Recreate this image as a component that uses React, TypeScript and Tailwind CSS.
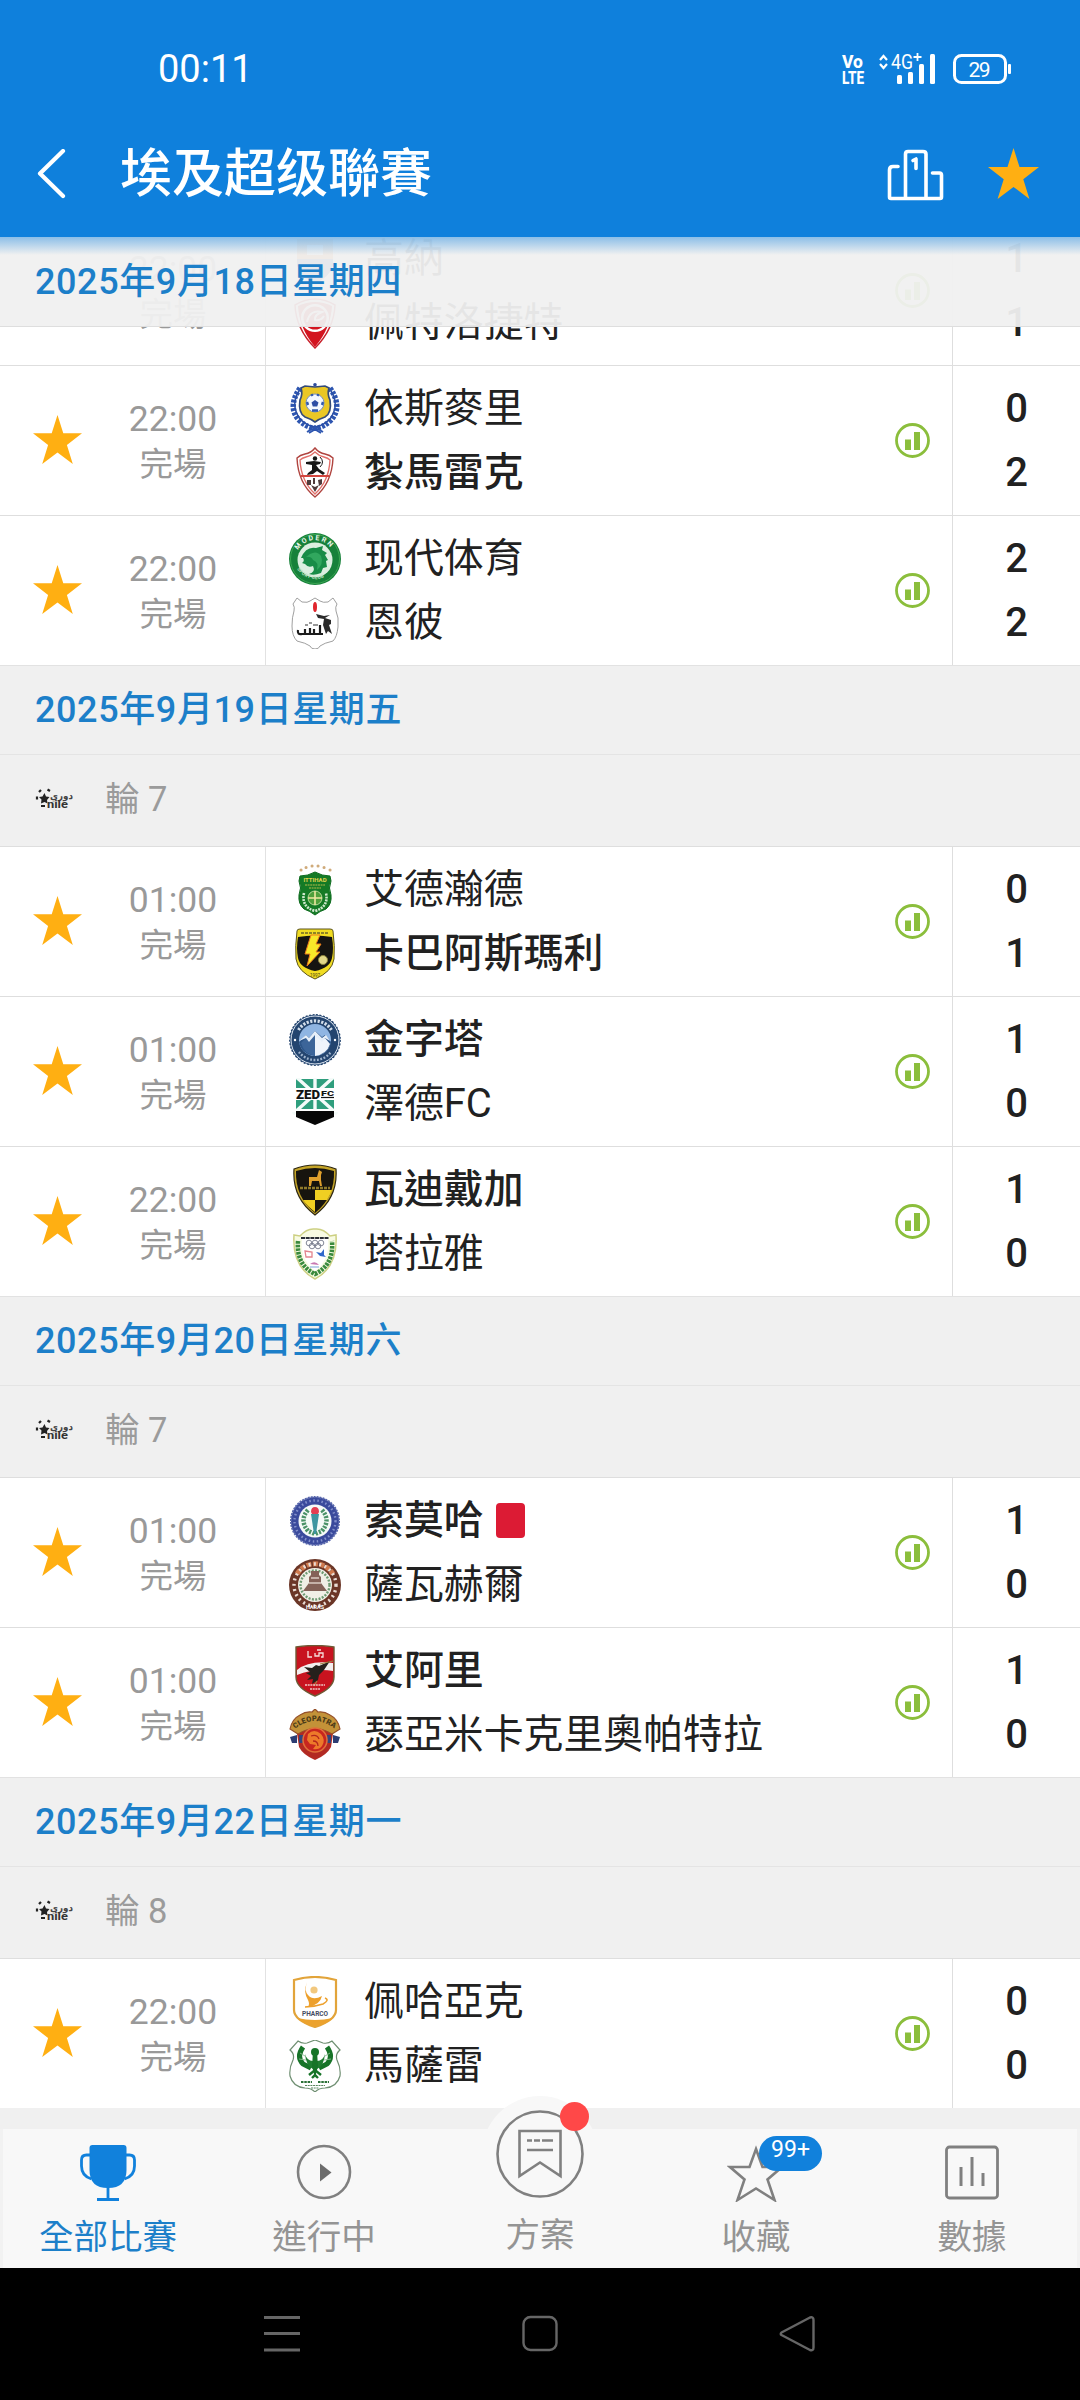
import type { ReactNode } from 'react'

type Team = { name: string; crest: string; score: number; win?: boolean; red?: boolean }
type Match = { time: string; home: Team; away: Team; starred?: boolean }
type Day = { date: string; round?: number; matches: Match[] }

const hidden: Match = {
  time: '22:00',
  starred: false,
  home: { name: '高納', crest: 'gouna', score: 1 },
  away: { name: '佩特洛捷特', crest: 'petrojet', score: 1 },
}

const firstDay: Match[] = [
  {
    time: '22:00',
    home: { name: '依斯麥里', crest: 'ismaily', score: 0 },
    away: { name: '紮馬雷克', crest: 'zamalek', score: 2, win: true },
  },
  {
    time: '22:00',
    home: { name: '现代体育', crest: 'modern', score: 2 },
    away: { name: '恩彼', crest: 'enppi', score: 2 },
  },
]

const days: Day[] = [
  {
    date: '2025年9月19日星期五',
    round: 7,
    matches: [
      {
        time: '01:00',
        home: { name: '艾德瀚德', crest: 'ittihad', score: 0 },
        away: { name: '卡巴阿斯瑪利', crest: 'kahraba', score: 1, win: true },
      },
      {
        time: '01:00',
        home: { name: '金字塔', crest: 'pyramids', score: 1, win: true },
        away: { name: '澤德FC', crest: 'zed', score: 0 },
      },
      {
        time: '22:00',
        home: { name: '瓦迪戴加', crest: 'degla', score: 1, win: true },
        away: { name: '塔拉雅', crest: 'talaea', score: 0 },
      },
    ],
  },
  {
    date: '2025年9月20日星期六',
    round: 7,
    matches: [
      {
        time: '01:00',
        home: { name: '索莫哈', crest: 'smouha', score: 1, win: true, red: true },
        away: { name: '薩瓦赫爾', crest: 'haras', score: 0 },
      },
      {
        time: '01:00',
        home: { name: '艾阿里', crest: 'ahly', score: 1, win: true },
        away: { name: '瑟亞米卡克里奧帕特拉', crest: 'cleopatra', score: 0 },
      },
    ],
  },
  {
    date: '2025年9月22日星期一',
    round: 8,
    matches: [
      {
        time: '22:00',
        home: { name: '佩哈亞克', crest: 'pharco', score: 0 },
        away: { name: '馬薩雷', crest: 'masry', score: 0 },
      },
    ],
  },
]

const crests: Record<string, ReactNode> = {
  gouna: (
    <>
      <path d="M8 6h36v26q-3 12-18 18Q11 44 8 32z" fill="#e8843c" />
      <path d="M8 26h36v6q-3 12-18 18Q11 44 8 32z" fill="#2b4d9c" />
      <path d="M18 12h16v10H18z" fill="#fff" />
    </>
  ),
  petrojet: (
    <>
      <path d="M6 8Q26-4 46 8q-1 24-20 43Q7 32 6 8z" fill="#fff" stroke="#c8202a" strokeWidth="1.5" />
      <path d="M9 9Q26 1 43 9q-1 22-17 41Q10 31 9 9z" fill="#d3141f" />
      <circle cx="26" cy="21" r="14" fill="#fff" />
      <circle cx="26" cy="21" r="11.5" fill="#d3141f" />
      <path d="M18 25q3-13 15-10-8 3-7 8 6 1 9-4" fill="none" stroke="#fff" strokeWidth="2" />
    </>
  ),
  ismaily: (
    <>
      <path d="M11 5Q-2 24 10 37q8 8 16 8 8 0 16-8Q54 24 41 5" fill="none" stroke="#2d55b0" strokeWidth="5.5" strokeDasharray="3 1.3" />
      <path d="M10 8Q1 22 11 36q7 7 15 8 8-1 15-8Q51 22 42 8" fill="none" stroke="#2a4fa6" strokeWidth="1.5" />
      <path d="M18 49l8-5 8 5M22 44l10 6M30 44l-10 6" fill="none" stroke="#2d55b0" strokeWidth="1.8" />
      <circle cx="26" cy="1.8" r="1.8" fill="#2d4b9c" />
      <path d="M12 5l4-2 10 1 10-1 4 2q-2 6 1 12 2 13-5 17-6 2-10 5-4-3-10-5-7-4-5-17 3-6 1-12z" fill="#eac725" stroke="#334a7a" strokeWidth="1.7" />
      <circle cx="26" cy="20" r="9" fill="#f4f8ff" stroke="#7891c8" strokeWidth="1" />
      <path d="M26 17l3.500 2.500-1.300 4h-4.400l-1.300-4z" fill="#2d4ea5" />
      <path d="M22 12.500l2-1M30 12.500l-2-1M18 19l1 3M34 19l-1 3M23 27.500h6" stroke="#3159ac" strokeWidth="2.400" fill="none" />
    </>
  ),
  zamalek: (
    <>
      <path d="M26 1q4 5 10 6 5 1 8 4-1 25-18 39Q9 36 8 11q3-3 8-4 6-1 10-6z" fill="#fff" stroke="#b0443f" strokeWidth="1.4" />
      <path d="M26 5q4 4 9 5 4 1 6 3-1 21-15 34Q12 34 11 13q2-2 6-3 5-1 9-5z" fill="#fff" stroke="#e2706b" strokeWidth="1.4" />
      <path d="M12 29h28" stroke="#d4453e" strokeWidth="2" />
      <circle cx="26" cy="11.500" r="2.200" fill="#171717" />
      <path d="M17 15l8-1 7 1-1 2-4 1 3 4 6 4-2 2-6-4-4 3-6 1 1-2 4-3v-5l-6-1z" fill="#171717" />
      <path d="M31 10q5 5 0 10" fill="none" stroke="#171717" strokeWidth="1" />
      <path d="M18 33h4v5h-4zM24 31h2v6h-2zM29 33l4-1v5l-3 2zM22 38l4 2 4-2-4 7z" fill="#4f3b3b" />
    </>
  ),
  modern: (
    <>
      <circle cx="26" cy="26" r="26" fill="#17813a" />
      <circle cx="26" cy="26" r="24.5" fill="none" stroke="#3ba653" strokeWidth="1" />
      <circle cx="26" cy="27" r="17.500" fill="#dcefe0" />
      <path d="M12 25q5-12 15-10l7-2-1 4 5 3-2 2 3 5-2 1 1 6-4 1-2 5q-7 3-12 1 7-2 4-8-5 2-8-2l-3-1q3-2 1-5z" fill="#188c47" />
      <path d="M21 21q7-4 11 2 3 8-4 14 2-8-4-10-2-4-7-3z" fill="#31a75e" />
      <path id="mod" d="M9 17A19.500 19.500 0 0 1 43 17" fill="none" />
      <path id="mod2" d="M8 36A22 22 0 0 0 45 36" fill="none" />
      <text fontSize="7" fontWeight="700" fill="#e9f6e9"><textPath href="#mod" textLength="38">MODERN</textPath></text>
      <text fontSize="4.6" fontWeight="700" fill="#bfe2c4" letterSpacing="0.4"><textPath href="#mod2">SPORT CLUB</textPath></text>
    </>
  ),
  enppi: (
    <>
      <path d="M8 1l5 4q6 1 8-1l5-3 5 3q3 2 8 1l5-4 4 6q-2 3-1 7 3 6 2 16-1 10-5 14-9 2-13 5-1 3-5 3t-5-3q-4-3-13-5-5-5-5-15 0-9 2-15 1-4-1-7z" fill="#fff" stroke="#a0a0a0" strokeWidth="1" />
      <ellipse cx="26" cy="10" rx="2" ry="5" fill="#e0252c" />
      <path d="M27 17l8 2 6-1-5 3 6 2v4l-2 1 3 9-4-3-2 3-3-9 1-6-6-1z" fill="#2b2b2b" />
      <path d="M9 33q-1 5 4 4h21M16 32v4M21 31v5M25 32v4M31 28v8" fill="none" stroke="#1b1b1b" strokeWidth="2.200" />
      <path d="M16 28h3m1-2h3m1 2h5" fill="none" stroke="#777" strokeWidth="1.400" />
    </>
  ),
  ittihad: (
    <>
      <path d="M12 6h.1M17 3.500h.1M23 2h.1M29 2h.1M35 3.500h.1M41 6h.1" stroke="#d0ab7b" strokeWidth="3" strokeLinecap="round" />
      <path d="M11 12q8 0 15-4 7 4 15 4l1 5q-3 7 0 14 1 9-5 14-6 2-11 6-5-4-11-6-6-5-5-14 3-7 0-14z" fill="#147a25" stroke="#0b6a1c" strokeWidth="1" />
      <text x="26" y="18" fontSize="6" fontWeight="700" fill="#e3d64f" textAnchor="middle">ITTIHAD</text>
      <path d="M16 21h20M20 24h12" stroke="#b5b94a" strokeWidth="1.2" strokeDasharray="2 .6" />
      <path d="M15 29q-3 14 11 18 14-4 11-18" fill="none" stroke="#cfe8cd" strokeWidth="2.6" strokeDasharray="2 1" />
      <circle cx="26" cy="34" r="7" fill="#4fa03c" stroke="#b6d89a" />
      <path d="M26 27v14M19 34h14" stroke="#eee6a0" strokeWidth="1.6" />
    </>
  ),
  kahraba: (
    <>
      <path d="M8 3q0-2 3-2h30q3 0 3 2 2 15 1 28-2 13-19 20Q9 44 7 31 6 18 8 3z" fill="#f1dc22" stroke="#5c5520" strokeWidth="1" />
      <path d="M9 9q17-3 34 0 2 12 0 21-2 10-17 13Q11 40 9 30q-2-10 0-21z" fill="#151411" />
      <path d="M12 5h28" stroke="#6d6628" strokeWidth="1.6" strokeDasharray="3 1" />
      <path d="M22 7h9l-4 9h5l-5 8h4L18 38l3-12h-5z" fill="#f8e829" stroke="#ec7a1c" strokeWidth="1" />
      <circle cx="34" cy="32" r="4.500" fill="#e2d889" stroke="#8b833c" />
      <text x="26" y="49" fontSize="4.500" fill="#4b4518" textAnchor="middle">1997</text>
    </>
  ),
  pyramids: (
    <>
      <circle cx="26" cy="26" r="25.200" fill="#24456f" stroke="#23446e" strokeWidth="1.4" strokeDasharray="2 1.500" />
      <circle cx="26" cy="26" r="24" fill="none" stroke="#dfe8f3" strokeWidth="1" />
      <circle cx="26" cy="26" r="16" fill="#8fb5e2" />
      <path d="M10 28l7-7 3 3 6-7 7 6 3-2 6 7q-2 12-16 14-14-2-16-14z" fill="#2c5588" />
      <path d="M12 29l6-6 3 4 5-7v22Q15 40 12 29z" fill="#3c6599" />
      <path d="M26 20l7 6 3-2 5 6q-3 10-15 12z" fill="#eef4fb" />
      <path d="M10 27l7-6 3 3 6-7 7 7 4-3 4 6-5-3-3 4-7-7-6 7-3-4z" fill="#e6eff9" />
      <path d="M9.500 16A19.500 19.500 0 0 1 42.500 16" fill="none" stroke="#d3deea" strokeWidth="3.200" strokeDasharray="2.200 1.500" />
      <path d="M10 38A20 20 0 0 0 42 38" fill="none" stroke="#9fb4cd" strokeWidth="2.400" strokeDasharray="1.800 1.600" />
      <circle cx="6" cy="26" r="1.200" fill="#fff" />
      <circle cx="46" cy="26" r="1.200" fill="#fff" />
    </>
  ),
  zed: (
    <>
      <path d="M7 1h38v30H7z" fill="#2f9e7d" />
      <path d="M26 16L5 -3M26 16L47 -3M26 16V0M26 16L4 36M26 16L48 36M26 16v16" stroke="#f4fbf9" strokeWidth="3.400" />
      <path d="M0 10h52v12H0zM0 0h7v34H0zM45 0h7v34h-7z" fill="#fff" />
      <path d="M7 33h38v6L26 47 7 39z" fill="#070707" />
      <text x="7" y="20.500" fontSize="12" fontWeight="900" fill="#131313" textLength="24" lengthAdjust="spacingAndGlyphs">ZED</text>
      <text x="32" y="17.500" fontSize="8" fontWeight="900" fill="#131313" textLength="13" lengthAdjust="spacingAndGlyphs">FC</text>
      <path d="M32 19.500h13" stroke="#131313" strokeWidth="1.200" />
    </>
  ),
  degla: (
    <>
      <path d="M5 5q21-8 42 0 2 29-21 46Q3 34 5 5z" fill="#c5a528" stroke="#2e2813" strokeWidth="1.200" />
      <path d="M7 7q19-6 38 0 1 26-19 42Q6 33 7 7z" fill="#17140e" />
      <path d="M26 26h17q-2 5-5 10H26zM26 36v12Q18 42 14 36z" fill="#f0cf22" />
      <path d="M20 13h8l2-7 3 2-1 3v5l1 6h-2l-1-5h-7l-1 5h-2v-5z" fill="#e0a02c" />
      <path d="M11 24h30" stroke="#8f7a2a" strokeWidth="2.600" strokeDasharray="3 1" />
    </>
  ),
  talaea: (
    <>
      <path d="M5 7l6 1Q18 0 26 1q8-1 15 7l6-1q2 32-21 44Q3 39 5 7z" fill="#f8fbe3" stroke="#cdd083" strokeWidth="1.500" />
      <path d="M9 13q-2 24 17 33 19-9 17-33" fill="none" stroke="#3a8a3d" strokeWidth="4.500" strokeDasharray="2.600 1" />
      <path d="M13 11q13-3 26 0 2 21-13 32Q11 32 13 11z" fill="#fff" />
      <path d="M12 10h28" stroke="#2b2f35" strokeWidth="2.200" strokeDasharray="4 .7" />
      <g fill="none" stroke="#777c8c" strokeWidth=".9">
        <circle cx="20" cy="15" r="2.800" /><circle cx="26" cy="15" r="2.800" /><circle cx="32" cy="15" r="2.800" /><circle cx="23" cy="18" r="2.800" /><circle cx="29" cy="18" r="2.800" />
      </g>
      <path d="M16 23l7 1v5h-6z" fill="none" stroke="#e4848d" strokeWidth="1.300" />
      <path d="M27 24l5 1 3-4v6l2 2-6-1z" fill="#2f68cb" />
      <path d="M21 36q5-4 9 1z" fill="#c878b2" />
      <path d="M21 39h9" stroke="#7aa2d8" />
    </>
  ),
  smouha: (
    <>
      <circle cx="26" cy="26" r="24" fill="#3a4a9c" stroke="#5867ac" strokeWidth="2" strokeDasharray="2 1" />
      <circle cx="26" cy="26" r="20.500" fill="none" stroke="#8491cc" strokeWidth="2.400" strokeDasharray="1.500 2.600" />
      <circle cx="26" cy="26" r="16.500" fill="#f5faf8" />
      <path d="M19 15q-9 10 0 21l7 3 7-3q9-11 0-21" fill="none" stroke="#4a9268" strokeWidth="4.500" strokeDasharray="2.200 1.300" />
      <path d="M22 19h8l-3 20h-2z" fill="#3e95a0" />
      <path d="M22 17q0-5 4-5t4 5l-1 2h-6z" fill="#e43e52" />
    </>
  ),
  haras: (
    <>
      <circle cx="26" cy="26" r="26" fill="#6b3627" />
      <path d="M8 15A21 21 0 0 1 44 15" fill="none" stroke="#cf7a4e" strokeWidth="5" strokeDasharray="5 1.500" />
      <circle cx="26" cy="26" r="21" fill="none" stroke="#e9dcd4" strokeWidth="3.400" strokeDasharray="2 3.400" />
      <circle cx="26" cy="26" r="17" fill="#f0efe6" />
      <circle cx="26" cy="26" r="14.500" fill="none" stroke="#6d9a72" strokeWidth="2.400" strokeDasharray="2 1.400" />
      <path d="M22 12h8v4l2 2v6l6 8H14l6-8v-6l2-2z" fill="#846258" />
      <path d="M22 19h8M20 24h12" stroke="#d9cbc2" strokeWidth="1.500" />
      <text x="26" y="49.500" fontSize="5.500" fontWeight="700" fill="#fff" textAnchor="middle">HARAS</text>
    </>
  ),
  ahly: (
    <>
      <path d="M7 2q19-3 38 0v30q0 11-19 19Q7 43 7 32z" fill="#c8131f" stroke="#6e5a35" strokeWidth="1.400" />
      <path d="M8 25q12-10 36-7v8q-18-3-36 4z" fill="#f3eeee" />
      <path d="M15 22l8 1 4-3 3 1 11-5-6 9-5 5-1 5-6 4 1-5-6 1 4-4-5-3 4-1z" fill="#26201c" />
      <path d="M31 19l13-3M28 36l-3 5" stroke="#9d8141" strokeWidth="1.200" />
      <path d="M19 6v6h4M26 8v3h4V8h4v4h-2M28 5h4" fill="none" stroke="#f6e1de" strokeWidth="1.300" />
      <path d="M16 40h20M21 44h10" stroke="#eec5c3" strokeWidth="1.500" strokeDasharray="2 .7" />
    </>
  ),
  cleopatra: (
    <>
      <path d="M7 18h38l-3 20q-4 8-16 13Q14 46 10 38z" fill="#b22a23" />
      <path d="M1 28l7-2v8H3zM51 28l-7-2v8h5z" fill="#2c3d73" />
      <path d="M10 26h32v8H10z" fill="#34457c" />
      <path d="M11 6q6-4 12-3l3-3 3 3q6-1 12 3 8 4 10 14l-8 5q-17-11-34 0l-8-5Q3 10 11 6z" fill="#c39238" stroke="#96512a" strokeWidth="1.200" />
      <path id="cleo" d="M6 20Q26 4 46 20" fill="none" />
      <text fontSize="7.500" fontWeight="900" fill="#4b3a16"><textPath href="#cleo" textLength="43">CLEOPATRA</textPath></text>
      <circle cx="26" cy="31" r="12" fill="#c7261f" stroke="#e0703a" strokeWidth="1.500" />
      <path d="M19 25q6-6 13 0 5 6 1 12-3 4-9 3l3-4-6-1-3-4z" fill="#ed7a2a" />
      <path d="M22 27q6-2 8 3M24 32q5 0 5 5" fill="none" stroke="#b3251c" strokeWidth="1.300" />
    </>
  ),
  pharco: (
    <>
      <path d="M5 4q21-6 42 0v30q0 10-21 17Q5 44 5 34z" fill="#fff" stroke="#e2a43a" strokeWidth="2.200" />
      <path d="M8 42q18 4 36 0-4 5-18 9Q12 47 8 42z" fill="#eba22e" />
      <path d="M18 6q-3 9 1 13 5 6 14 1-2 9-14 11 2-3 0-7-5-8-1-18z" fill="#eda02c" />
      <circle cx="25" cy="14" r="3.600" fill="#f2c87e" />
      <path d="M36 22q5 2-2 6-9 3-18 3" fill="none" stroke="#eda02c" strokeWidth="1.500" />
      <text x="26" y="39.500" fontSize="6.500" fontWeight="700" fill="#444b62" textAnchor="middle">PHARCO</text>
    </>
  ),
  masry: (
    <>
      <path d="M9 1q4 3 9 2l8-3 8 3q5 1 9-2l8 9q-5 4-3 10 4 8 3 16-3 11-15 12-6 0-10 4-4-4-10-4Q4 47 1 36q-1-8 3-16 2-6-3-10z" fill="#fff" stroke="#6f8f72" strokeWidth="1.200" />
      <path d="M14 7Q7 17 14 24l8 4M38 7q7 10 0 17l-8 4" fill="none" stroke="#177428" strokeWidth="5" />
      <path d="M16 14q2 7 8 7h4q6 0 8-7-1 12-8 15l-2 1-2-1q-7-3-8-15z" fill="#1f7d31" />
      <circle cx="26" cy="12" r="4" fill="#177428" />
      <path d="M24 12h4l1 14-3 12-3-12z" fill="#177428" />
      <path d="M20 35l6-5 6 5M23 38l3-3 3 3" fill="none" stroke="#177428" strokeWidth="2.400" />
      <path d="M11 13l5 3M10 19l7 1M41 13l-5 3M42 19l-7 1" stroke="#8dbb93" strokeWidth=".9" />
      <path d="M12 42h11M29 42h11" stroke="#2a7036" strokeWidth="2" strokeDasharray="2.500 .8" />
      <path d="M16 45.500h20M22 48h8" stroke="#58865e" strokeWidth="1.200" strokeDasharray="2 .7" />
    </>
  ),
}

function Star({ className }: { className: string }) {
  return (
    <svg className={className} viewBox="0 0 50 50" fill="#ffaf12">
      <path d="M25 0l5.900 18.700H50L34.600 30.600 40.600 50 25 38.200 9.400 50l6-19.400L0 18.700h19.100z" />
    </svg>
  )
}

function TeamLine({ team }: { team: Team }) {
  return (
    <div className="flex h-16 items-center">
      <svg className="h-[52px] w-[52px] shrink-0" viewBox="0 0 52 52">{crests[team.crest]}</svg>
      <span className={`ml-[23px] whitespace-nowrap text-[39.9px] leading-[64px] text-[#212121] ${team.win ? 'font-medium' : 'font-normal'}`}>
        {team.name}
      </span>
      {team.red && <span className="ml-[12px] h-[35px] w-[29px] rounded-[4px] bg-[#dc1b34]" />}
    </div>
  )
}

function MatchRow({ match }: { match: Match }) {
  return (
    <div className="flex h-[150px] border-t border-[#dedede] bg-white">
      <div className="flex w-[266px] items-center border-r border-[#e2e2e2]">
        <Star className={`mb-[2px] ml-[33px] h-[49px] w-[49px] ${match.starred === false ? 'invisible' : ''}`} />
        <div className="ml-[42px] mt-[3px] w-[98px] text-center text-[35.5px] leading-[45px] text-[#999]">
          <div>{match.time}</div>
          <div className="text-[33.5px]">完場</div>
        </div>
      </div>
      <div className="flex flex-1 items-center pl-[23px]">
        <div className="flex-1">
          <TeamLine team={match.home} />
          <TeamLine team={match.away} />
        </div>
        <svg className="mr-[22px] h-[35px] w-[35px]" viewBox="0 0 35 35" fill="#8bbe3c">
          <circle cx="17.500" cy="17.500" r="16" fill="none" stroke="#8bbe3c" strokeWidth="2.800" />
          <path d="M10 16.500h6V27h-6zM19 9h6v18h-6z" />
        </svg>
      </div>
      <div className="flex w-[128px] flex-col items-center justify-center border-l border-[#dedede] text-[40px] font-medium leading-[64px] text-[#212121]">
        <div>{match.home.score}</div>
        <div>{match.away.score}</div>
      </div>
    </div>
  )
}

function LeagueLogo() {
  return (
    <svg className="mb-[3px] h-5 w-10 overflow-visible" viewBox="0 0 40 20">
      <path d="M8.500 5l1.500 3.500 3.500.5-2.500 3 .5 3.500-3-1.500-3.500 1.500.5-4-2.500-2.500 3.500-.5z" fill="#222" />
      <path d="M3 4l2-2M11.500 1.500l2.500 1.500M1 8.500v3M5 18h4" stroke="#222" strokeWidth="2.200" />
      <text x="14" y="11" fontSize="10" fontWeight="700" fill="#444" textLength="23" lengthAdjust="spacingAndGlyphs" className="font-['DejaVu_Sans',sans-serif]">دوري</text>
      <text x="11" y="20" fontSize="10" fontWeight="700" fill="#333" textLength="21" lengthAdjust="spacingAndGlyphs">nile</text>
    </svg>
  )
}

function DateBar({ date }: { date: string }) {
  return (
    <div className="flex h-[89px] items-center border-t border-[#e2e2e2] bg-[#f0f0f0] pl-[35px] text-[36px] font-medium tracking-[0.6px] text-[#1c7fc9]">
      {date}
    </div>
  )
}

function RoundBar({ round }: { round: number }) {
  return (
    <div className="flex h-[92px] items-center border-t border-[#e4e4e4] bg-[#f0f0f0] pb-[2px] pl-9 text-[34.5px] text-[#9b9b9b]">
      <LeagueLogo />
      <span className="ml-[29px]">輪 {round}</span>
    </div>
  )
}

function StatusBar() {
  return (
    <div className="flex h-[137px] items-center justify-between pl-[158px] pr-[68px] text-white">
      <span className="text-[38px] leading-[38px]">00:11</span>
      <svg className="h-8 w-[172px] overflow-visible" viewBox="840 53 172 32" fill="#fff">
        <text x="842" y="68" fontSize="19" fontWeight="800" textLength="21" lengthAdjust="spacingAndGlyphs">Vo</text>
        <text x="842" y="84" fontSize="19" fontWeight="800" textLength="22" lengthAdjust="spacingAndGlyphs">LTE</text>
        <path d="M880 60l3.500-4 3.500 4M880 64l3.500 4 3.500-4" fill="none" stroke="#fff" strokeWidth="2.200" />
        <text x="891" y="69" fontSize="20" textLength="22" lengthAdjust="spacingAndGlyphs">4G</text>
        <path d="M913.500 57h8M917.500 53v8" stroke="#fff" strokeWidth="1.800" />
        <rect x="897" y="75" width="5" height="9" rx="1.500" />
        <rect x="908" y="72" width="5" height="12" rx="1.500" />
        <rect x="919" y="64" width="5" height="20" rx="1.500" />
        <rect x="930" y="54" width="5" height="30" rx="1.500" />
        <rect x="954.500" y="55.500" width="51" height="27" rx="7" fill="none" stroke="#fff" strokeWidth="3" />
        <rect x="1008" y="64" width="3" height="10" rx="1" />
        <text x="968.500" y="76.500" fontSize="21" textLength="22">29</text>
      </svg>
    </div>
  )
}

function TitleBar() {
  return (
    <div className="flex h-[100px] items-start pl-[35px] pr-[41px] text-white">
      <svg className="mt-[12px] h-[50px] w-8" viewBox="0 0 32 50" fill="none" stroke="#fff" strokeWidth="4.200">
        <path d="M28 2L5 24.500 28 47" strokeLinecap="round" strokeLinejoin="round" />
      </svg>
      <h1 className="ml-[53px] flex-1 text-[52px] font-medium leading-[76px]">埃及超级聯賽</h1>
      <svg className="mt-[12px] h-[52px] w-[58px]" viewBox="887 149 58 52" fill="none" stroke="#fff" strokeWidth="3.600" strokeLinecap="round" strokeLinejoin="round">
        <path d="M898 166.500h-5q-3.500 0-3.500 3.500v27q0 1.500 1.500 1.500h49q1.500 0 1.500-1.500v-22q0-2-2-2h-7" />
        <path d="M905.500 198V154q0-2.500 2.500-2.500h15q3 0 3 2.500v44" />
        <path d="M913 160.500l3-1.500v9.500" />
      </svg>
      <Star className="ml-[43px] mt-[11px] h-[51px] w-[51px]" />
    </div>
  )
}

function NavItem({ label, active, raised, children }: { label: string; active?: boolean; raised?: boolean; children: ReactNode }) {
  return (
    <div className={`flex flex-1 flex-col items-center justify-end ${active ? 'text-[#1c7fc9]' : 'text-[#949494]'} ${raised ? 'pb-[11px]' : 'pb-[9px]'}`}>
      {children}
      <span className="mt-[13px] text-[34.5px] leading-[44px]">{label}</span>
    </div>
  )
}

function BottomNav() {
  return (
    <nav className="relative z-10 mt-[21px] flex h-[139px] bg-[#f8f8f8] shadow-[inset_3px_0_#f2f2f2,inset_-3px_0_#f2f2f2]">
      <NavItem label="全部比賽" active>
        <svg className="h-[58px] w-[58px]" viewBox="79.5 2144 58 58" fill="none" stroke="#1181dc" strokeWidth="2.800">
          <path d="M90 2148q0-3 3-3h31q3 0 3 3v22q0 18-18.500 18T90 2170z" fill="#1181dc" stroke="none" />
          <path d="M91 2155h-4q-5 0-5 5v6q0 10 10 13M126 2155h4q5 0 5 5v6q0 10-10 13M108.500 2187v12M97.500 2199.500h22" />
        </svg>
      </NavItem>
      <NavItem label="進行中">
        <svg className="h-[58px] w-[58px]" viewBox="0 0 58 58">
          <circle cx="29" cy="28" r="26" fill="none" stroke="#808080" strokeWidth="2.600" />
          <path d="M25 19.500v18l11.500-9z" fill="#6c6c6c" />
        </svg>
      </NavItem>
      <NavItem label="方案" raised>
        <div className="relative -mb-[12px] h-[116px] w-[116px] shrink-0 rounded-full bg-[#f8f8f8]">
          <svg className="h-[116px] w-[116px]" viewBox="0 0 116 116" fill="none" stroke="#808080" strokeWidth="2.600">
            <circle cx="58" cy="58" r="42.500" />
            <path d="M37.500 35h41v45L58 66.500 37.500 80z" />
            <path d="M45 44.500h5m2 0h6M60 44.500h11M45 54h26" />
          </svg>
          <span className="absolute left-[78px] top-[6px] h-[29px] w-[29px] rounded-full bg-[#ff4848]" />
        </div>
      </NavItem>
      <NavItem label="收藏">
        <div className="relative h-[58px] w-[58px]">
          <svg className="h-[58px] w-[58px]" viewBox="0 0 58 58" fill="none" stroke="#808080" strokeWidth="2.600">
            <path d="M29 5l6.500 18H55L40.500 35.500 47.500 56 29 44.500 10.500 56l7-20.500L3 23h19.500z" />
          </svg>
          <span className="absolute left-[32px] top-[-8px] h-[35px] w-[63px] rounded-full bg-[#1181dc] text-center text-[23px] leading-[27px] text-white">99+</span>
        </div>
      </NavItem>
      <NavItem label="數據">
        <svg className="h-[58px] w-[58px]" viewBox="0 0 58 58" fill="none" stroke="#808080" strokeWidth="2.800">
          <rect x="3.500" y="3" width="51" height="51" rx="3" />
          <path d="M18 23v19M29 13v29M40 29v13" strokeWidth="3" />
        </svg>
      </NavItem>
    </nav>
  )
}

function SystemNav() {
  return (
    <div className="flex h-[132px] items-center justify-between bg-black px-[263px]">
      <svg className="h-10 w-10" viewBox="0 0 40 40" stroke="#666" strokeWidth="3">
        <path d="M1 3.500h36M1 19.500h36M1 36h36" />
      </svg>
      <svg className="h-10 w-10" viewBox="0 0 40 40" fill="none" stroke="#666" strokeWidth="2.400">
        <rect x="3.500" y="3" width="33" height="33" rx="7" />
      </svg>
      <svg className="h-10 w-10" viewBox="0 0 40 40" fill="none" stroke="#666" strokeWidth="2.400" strokeLinejoin="round">
        <path d="M4.500 18.500q-1.500 1.500 0 2.500L33 36q3.500 1 3.500-2.500V6q0-3.500-3.500-2.500z" />
      </svg>
    </div>
  )
}

export default function App() {
  return (
    <div className="h-[2400px] w-[1080px] overflow-hidden bg-[#f0f0f0] font-['Roboto','Noto_Sans_CJK_TC',sans-serif]">
      <header className="h-[237px] bg-[#0f80dc]">
        <StatusBar />
        <TitleBar />
      </header>

      {/* sticky date bar, with the row scrolled under it showing through */}
      <div className="relative h-[128px] overflow-hidden">
        <div className="-mt-[22px]">
          <MatchRow match={hidden} />
        </div>
        <div className="absolute inset-x-0 top-0 flex h-[90px] items-center border-b border-[#dedede] bg-[#f0f0f0]/95 pl-[35px] text-[36px] font-medium tracking-[0.6px] text-[#1c7fc9]">
          2025年9月18日星期四
        </div>
        <div className="absolute inset-x-0 top-0 h-[18px] bg-linear-to-b from-[#0f80dc]/45 to-[#0f80dc]/0" />
      </div>

      {firstDay.map(m => <MatchRow key={m.home.name} match={m} />)}

      {days.map(day => (
        <section key={day.date}>
          <DateBar date={day.date} />
          {day.round && <RoundBar round={day.round} />}
          {day.matches.map(m => <MatchRow key={m.home.name} match={m} />)}
        </section>
      ))}

      <BottomNav />
      <SystemNav />
    </div>
  )
}
